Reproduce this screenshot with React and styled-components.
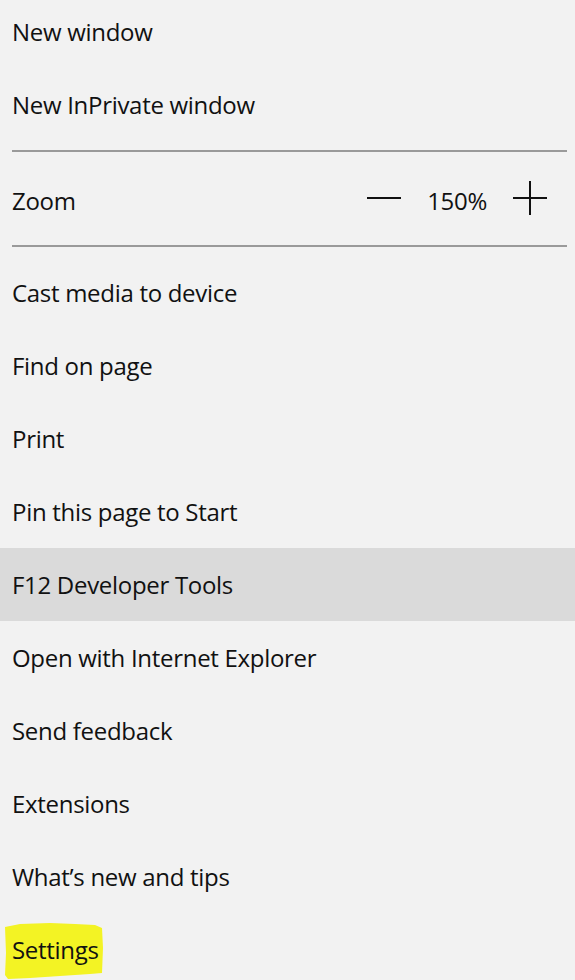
import React from "react";
import styled, { createGlobalStyle } from "styled-components";

const Global = createGlobalStyle`
  html, body { margin: 0; padding: 0; background: #f2f2f2; overflow: hidden; }
  body { font-family: "Open Sans", "Noto Sans", "Liberation Sans", sans-serif; }
`;

const Menu = styled.div`
  display: flex;
  flex-direction: column;
  margin-top: -5px;
  width: 575px;
  color: #111;
  letter-spacing: -0.3px;
`;

const Item = styled.div`
  position: relative;
  display: flex;
  align-items: center;
  height: 73px;
  padding-left: 12px;
  font-size: 24px;
  background: ${(p) => (p.$active ? "#dadada" : "transparent")};
`;

const Label = styled.span`
  position: relative;
  z-index: 1;
`;

const Divider = styled.div`
  height: 2px;
  margin: ${(p) => (p.$top ? "9px 8px 0 12px" : "0 8px 9px 12px")};
  background: #9a9a9a;
`;

const ZoomRow = styled.div`
  display: flex;
  align-items: center;
  height: 93px;
  padding: 4px 28px 0 12px;
  box-sizing: border-box;
  font-size: 24px;
`;

const ZoomLabel = styled.span`
  flex: 1;
`;

const ZoomControls = styled.div`
  display: flex;
  align-items: center;
  gap: 26px;
`;

const IconSvg = styled.svg`
  display: block;
  width: 34px;
  height: 34px;
  margin-top: -5px;
`;

const Percent = styled.span`
  font-size: 24px;
`;

const Marker = styled.svg`
  position: absolute;
  left: 0;
  top: 0;
  width: 110px;
  height: 73px;
  z-index: 0;
`;

const Minus = () => (
  <IconSvg viewBox="0 0 34 34">
    <line x1="0" y1="17" x2="34" y2="17" stroke="#111" strokeWidth="2" />
  </IconSvg>
);

const Plus = () => (
  <IconSvg viewBox="0 0 34 34">
    <line x1="0" y1="17" x2="34" y2="17" stroke="#111" strokeWidth="2" />
    <line x1="17" y1="0" x2="17" y2="34" stroke="#111" strokeWidth="2" />
  </IconSvg>
);

const top = ["New window", "New InPrivate window"];
const rest = [
  "Cast media to device",
  "Find on page",
  "Print",
  "Pin this page to Start",
  "F12 Developer Tools",
  "Open with Internet Explorer",
  "Send feedback",
  "Extensions",
  "What\u2019s new and tips",
];

export default function App() {
  return (
    <>
      <Global />
      <Menu>
        {top.map((t) => (
          <Item key={t}>
            <Label>{t}</Label>
          </Item>
        ))}
        <Divider $top />
        <ZoomRow>
          <ZoomLabel>Zoom</ZoomLabel>
          <ZoomControls>
            <Minus />
            <Percent>150%</Percent>
            <Plus />
          </ZoomControls>
        </ZoomRow>
        <Divider />
        {rest.map((t) => (
          <Item key={t} $active={t === "F12 Developer Tools"}>
            <Label>{t}</Label>
          </Item>
        ))}
        <Item>
          <Marker viewBox="0 0 110 73">
            <path
              d="M5 14 L20 11 L50 10 L75 11 L95 12 L102 15 L103 35 L102 60 L90 61 L60 63 L30 65 L8 66 L5 62 L6 40 Z"
              fill="#f3f324"
            />
          </Marker>
          <Label>Settings</Label>
        </Item>
      </Menu>
    </>
  );
}
